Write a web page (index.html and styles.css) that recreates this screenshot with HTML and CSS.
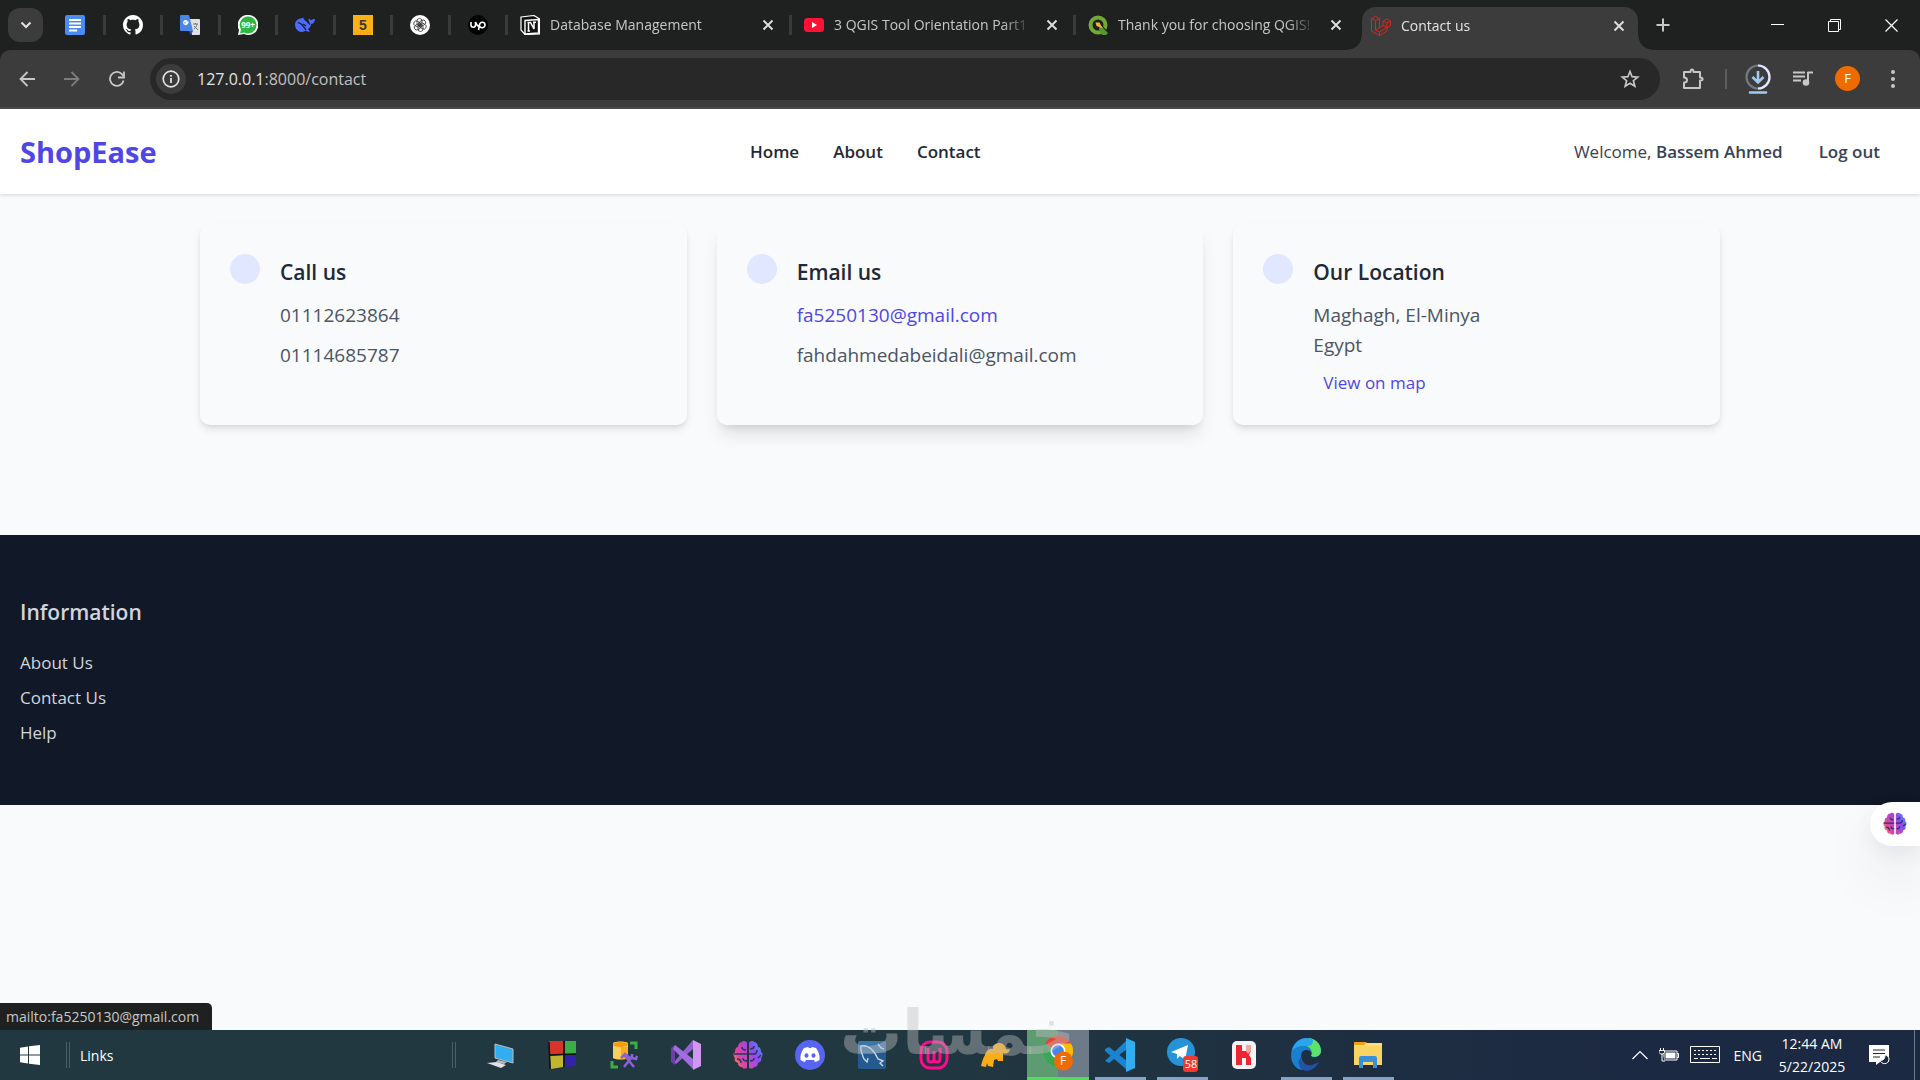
FILE: index.html
```html
<!DOCTYPE html>
<html lang="en">
  <head>
    <meta charset="utf-8" />
    <title>Contact us</title>
    <link rel="stylesheet" href="styles.css" />
  </head>
  <body>
    <!-- Shared icons -->
    <svg class="defs" aria-hidden="true">
      <defs>
        <linearGradient id="brain-left" x1="0" y1="1" x2="1" y2="0">
          <stop offset="0" stop-color="#f7a13c" />
          <stop offset="0.4" stop-color="#e0479b" />
          <stop offset="1" stop-color="#9a45e6" />
        </linearGradient>
        <linearGradient id="brain-right" x1="1" y1="0" x2="0" y2="1">
          <stop offset="0" stop-color="#38a5f5" />
          <stop offset="0.5" stop-color="#8a4df0" />
          <stop offset="1" stop-color="#d946b8" />
        </linearGradient>
        <symbol id="close" viewBox="0 0 12 12">
          <path d="M1.5 1.5l9 9M10.5 1.5l-9 9" stroke="currentColor" stroke-width="1.9" fill="none" />
        </symbol>
        <symbol id="brain" viewBox="0 0 30 30">
          <path fill="url(#brain-left)" d="M14 3v24c0 2-4 2-5 0-3 0-4-2-4-4-3-1-4-3-3-5-2-2-2-5 0-6 0-3 1-5 3-5 0-3 2-5 4-5 1-2 5-1 5 1z" />
          <path fill="url(#brain-right)" d="M16 3v24c0 2 4 2 5 0 3 0 4-2 4-4 3-1 4-3 3-5 2-2 2-5 0-6 0-3-1-5-3-5 0-3-2-5-4-5-1-2-5-1-5 1z" />
          <path class="brain-folds" d="M1 14h13M9 7c0 2 1 3 4 3M4 19c3 0 4 1 4 4M10 18c0 2 2 3 4 3M16 14h5c2 0 3-2 3-4M21 6c0 2-2 3-4 3M28 15l-3 3M17 21c3 0 4-1 4-3" />
        </symbol>
      </defs>
    </svg>

    <!-- Tab strip -->
    <div class="tabs">
      <button class="tab-search" aria-label="Search tabs">
        <svg width="12" height="8" viewBox="0 0 12 8"><path d="M1.5 1.5L6 6l4.5-4.5" fill="none" stroke="#e3e3e3" stroke-width="2" /></svg>
      </button>
      <div class="pinned">
        <button class="pin" aria-label="Docs">
          <svg width="20" height="20" viewBox="0 0 20 20"><rect width="20" height="20" rx="2" fill="#4b8bf5" /><path d="M4 5h12M4 8.5h12M4 12h12M4 15.5h8" stroke="#fff" stroke-width="1.8" /></svg>
        </button>
        <button class="pin" aria-label="GitHub">
          <svg width="20" height="20" viewBox="0 0 16 16"><path fill="#fff" d="M8 0C3.58 0 0 3.58 0 8c0 3.54 2.29 6.53 5.47 7.59.4.07.55-.17.55-.38 0-.19-.01-.82-.01-1.49-2.01.37-2.53-.49-2.69-.94-.09-.23-.48-.94-.82-1.13-.28-.15-.68-.52-.01-.53.63-.01 1.08.58 1.23.82.72 1.21 1.87.87 2.33.66.07-.52.28-.87.51-1.07-1.78-.2-3.64-.89-3.64-3.95 0-.87.31-1.59.82-2.15-.08-.2-.36-1.02.08-2.12 0 0 .67-.21 2.2.82.64-.18 1.32-.27 2-.27s1.36.09 2 .27c1.53-1.04 2.2-.82 2.2-.82.44 1.1.16 1.92.08 2.12.51.56.82 1.27.82 2.15 0 3.07-1.87 3.75-3.65 3.95.29.25.54.73.54 1.48 0 1.07-.01 1.93-.01 2.2 0 .21.15.46.55.38A8 8 0 0 0 16 8c0-4.42-3.58-8-8-8z" /></svg>
        </button>
        <button class="pin" aria-label="Translate">
          <svg width="20" height="20" viewBox="0 0 20 20"><path fill="#dfe1e5" d="M8 4h11a1 1 0 0 1 1 1v14a1 1 0 0 1-1 1h-7z" /><path fill="#4a86e8" d="M1 0h8l4 16H1a1 1 0 0 1-1-1V1a1 1 0 0 1 1-1z" /><path fill="#2a56c6" d="M9 16h4l-2 4z" /><path d="M8.5 7H6v1.5h1.5A2 2 0 1 1 7 6" fill="none" stroke="#fff" stroke-width="1.3" /><path d="M13 9h5M15.5 8v1M17 9c0 2-2 4-3 5M14 11l4 4" fill="none" stroke="#777" /></svg>
        </button>
        <button class="pin" aria-label="WhatsApp">
          <svg width="20" height="20" viewBox="0 0 20 20"><path fill="#fff" d="M10 0a10 10 0 1 1-4 19l-6 1 1-5A10 10 0 0 1 10 0z" /><path fill="#2bb741" d="M10 1.5a8.5 8.5 0 1 1-4 16l-4 1 1-4a8.5 8.5 0 0 1 7-13z" /><text x="10" y="13" class="badge-99">99+</text></svg>
        </button>
        <button class="pin" aria-label="DeepSeek">
          <svg width="20" height="16" viewBox="0 0 20 16"><path fill="#4d6bfe" d="M0 8c0-4 3-6.5 6-6.5 1 0 1.5-1 2.5-.5 0 2 3 3 5 6l1 1c1-1 .5-2-.5-3l-.5-3.5c1 1 2 .5 2.5 2 1-1 2-1.500 4-1.500 0 3-2 5-4 5 0 3-2 4-3 5l2 2.500c-2 .5-3-.5-5-.5-6 3-10-2-10-6.500z" /><path d="M3 6c3-1 5 3 8 7M8 7l3 2" fill="none" stroke="#1f2120" stroke-width="1.3" /></svg>
        </button>
        <button class="pin" aria-label="Khamsat">
          <svg width="20" height="20" viewBox="0 0 20 20"><rect width="20" height="20" fill="#fbb016" /><text x="10" y="15" class="five">5</text><path d="M1 17h18M2 19h17" stroke="#e8892b" stroke-width="1" stroke-dasharray="1 2" /></svg>
        </button>
        <button class="pin" aria-label="ChatGPT">
          <svg width="20" height="20" viewBox="0 0 20 20"><circle cx="10" cy="10" r="10" fill="#fff" /><g fill="none" stroke="#333" stroke-width=".8"><rect x="7" y="3.5" width="5" height="7.5" rx="2.5" /><rect x="7" y="3.5" width="5" height="7.5" rx="2.5" transform="rotate(60 10 10)" /><rect x="7" y="3.5" width="5" height="7.5" rx="2.5" transform="rotate(120 10 10)" /><rect x="7" y="3.5" width="5" height="7.5" rx="2.5" transform="rotate(180 10 10)" /><rect x="7" y="3.5" width="5" height="7.5" rx="2.5" transform="rotate(240 10 10)" /><rect x="7" y="3.5" width="5" height="7.5" rx="2.5" transform="rotate(300 10 10)" /></g></svg>
        </button>
        <button class="pin" aria-label="Upwork">
          <svg width="20" height="20" viewBox="0 0 20 20"><circle cx="10" cy="10" r="10" fill="#000" /><path d="M3 7v3c0 3 4.5 3 4.5 0V7c1 3 2 4 3.5 5M10.5 15l1-5c.5-4 5.5-3.5 5.5 0 0 3-3.5 3.5-5 1.5" fill="none" stroke="#fff" stroke-width="1.6" /></svg>
        </button>
      </div>
      <div class="tab">
        <svg width="20" height="20" viewBox="0 0 20 20"><path d="M1 2l13-1.5L19.5 4v15L5 19.5 1 15z" fill="#111" stroke="#fff" stroke-width="1.2" /><path d="M5 5.5L18.5 4.5v13.5L5 19z" fill="#111" stroke="#fff" stroke-width="1.4" /><path d="M7.5 7.5h3L14 14V7M8.5 8v8M7.5 16h2.5M13 7.3h3" fill="none" stroke="#fff" stroke-width="1.5" /></svg>
        <span class="tab-title">Database Management</span>
        <button class="tab-close" aria-label="Close tab"><svg width="12" height="12"><use href="#close" /></svg></button>
      </div>
      <div class="tab">
        <svg width="20" height="20" viewBox="0 0 20 20"><rect y="3" width="20" height="14" rx="3.5" fill="#ff1135" /><path d="M8 7l5 3-5 3z" fill="#fff" /></svg>
        <span class="tab-title">3 QGIS Tool Orientation Part1</span>
        <button class="tab-close" aria-label="Close tab"><svg width="12" height="12"><use href="#close" /></svg></button>
      </div>
      <div class="tab tab-last">
        <svg width="20" height="20" viewBox="0 0 20 20"><circle cx="10" cy="10" r="7.5" fill="none" stroke="#72a935" stroke-width="4" /><path d="M11 11l8 8" stroke="#1f2120" stroke-width="5" /><path d="M12 10l8 8-2 2-4 0-3-6z" fill="#589632" /><path d="M7.5 7.5h4l1.5 3 2 2.5-2.5-.5-4-1.5z" fill="#f2b52e" /></svg>
        <span class="tab-title">Thank you for choosing QGIS!</span>
        <button class="tab-close" aria-label="Close tab"><svg width="12" height="12"><use href="#close" /></svg></button>
      </div>
      <div class="tab tab-active">
        <svg width="20" height="20" viewBox="0 0 20 20"><path d="M.5 2.5L4.5.5l4 2v9l3.5-2V5l4-2 3.5 2v4.5l-3.5 2V15L8.5 19.5.5 15zM.5 2.5l4 2 4-2M4.5 4.5V14l4 2 7.5-4.5M4.5 14l4-2.5M8.5 16v3.5M12 5l3.8 2 3.7-2M15.8 7v4.5L12 9.5" fill="none" stroke="#d9251d" /></svg>
        <span class="tab-title">Contact us</span>
        <button class="tab-close" aria-label="Close tab"><svg width="12" height="12"><use href="#close" /></svg></button>
      </div>
      <button class="new-tab" aria-label="New tab">
        <svg width="14" height="14" viewBox="0 0 14 14"><path d="M7 .5v13M.5 7h13" stroke="#c7c7c7" stroke-width="2" /></svg>
      </button>
      <div class="window-buttons">
        <button aria-label="Minimize"><svg width="13" height="13" viewBox="0 0 13 13"><path d="M0 5.5h13" stroke="#fff" /></svg></button>
        <button aria-label="Restore"><svg width="13" height="13" viewBox="0 0 13 13"><path d="M.5 2.5h10v10H.5zM2.5 2.5v-2h10v10h-2" fill="none" stroke="#fff" /></svg></button>
        <button aria-label="Close"><svg width="13" height="13" viewBox="0 0 13 13"><path d="M.5.5l12 12M12.5.5l-12 12" stroke="#fff" stroke-width="1.2" /></svg></button>
      </div>
    </div>

    <!-- Toolbar -->
    <div class="toolbar">
      <button class="tool" aria-label="Back"><svg width="16" height="16" viewBox="0 0 16 16"><path d="M16 8H2M8.5 1L1.5 8l7 7" fill="none" stroke="#c7c7c7" stroke-width="1.8" /></svg></button>
      <button class="tool" aria-label="Forward"><svg width="16" height="16" viewBox="0 0 16 16"><path d="M0 8h14M7.5 1l7 7-7 7" fill="none" stroke="#7c7c7c" stroke-width="1.8" /></svg></button>
      <button class="tool" aria-label="Reload"><svg width="16" height="16" viewBox="0 0 16 16"><path d="M14.6 9.5A6.9 6.9 0 1 1 13 3.2l1.5 2" fill="none" stroke="#c7c7c7" stroke-width="1.8" /><path d="M15 .5v6H9" fill="none" stroke="#c7c7c7" stroke-width="1.8" /></svg></button>
      <div class="omnibox">
        <button class="site-info" aria-label="View site information"><svg width="18" height="18" viewBox="0 0 18 18"><circle cx="9" cy="9" r="7.8" fill="none" stroke="#e3e3e3" stroke-width="1.7" /><path d="M9 8v5M9 5v1.8" stroke="#e3e3e3" stroke-width="1.8" /></svg></button>
        <div class="url">127.0.0.1<span class="url-path">:8000/contact</span></div>
        <button class="bookmark" aria-label="Bookmark this tab"><svg width="20" height="20" viewBox="0 0 20 20"><path d="M10 2.5l2.1 5.2 5.6.4-4.3 3.6 1.4 5.5L10 14.2l-4.8 3 1.4-5.5L2.3 8.1l5.6-.4z" fill="none" stroke="#c7c7c7" stroke-width="1.7" /></svg></button>
      </div>
      <button class="tool tool-extensions" aria-label="Extensions"><svg width="22" height="22" viewBox="0 0 22 22"><path d="M2 4h6.5c0-3.5 3-3.5 3 0H18v5.5c3.5 0 3.5 3 0 3V20H2v-5.5c4 0 4-5 0-5z" fill="none" stroke="#c7c7c7" stroke-width="2" stroke-linejoin="round" /></svg></button>
      <span class="tool-line"></span>
      <button class="tool" aria-label="Downloads"><svg width="26" height="30" viewBox="0 0 26 30"><circle cx="13" cy="13" r="11.5" fill="none" stroke="#717984" stroke-width="2.2" /><path d="M13 1.5a11.5 11.5 0 0 1 0 23" fill="none" stroke="#e3e8ff" stroke-width="2.2" /><path d="M13 7v11M7.5 13l5.5 5.5 5.5-5.5" fill="none" stroke="#a2c9ee" stroke-width="2.6" /><path d="M5 28.5h16" stroke="#a2c9ee" stroke-width="2.5" stroke-linecap="round" /></svg></button>
      <button class="tool" aria-label="Media controls"><svg width="20" height="16" viewBox="0 0 20 16"><path d="M0 1.5h12M0 5.5h12M0 9.5h8M14.5 1.5H20M15 1v10" stroke="#c7c7c7" stroke-width="2" /><circle cx="13" cy="11.5" r="3.3" fill="#c7c7c7" /></svg></button>
      <button class="tool" aria-label="Profile"><span class="avatar">F</span></button>
      <button class="tool" aria-label="Menu"><svg width="4" height="18" viewBox="0 0 4 18"><g fill="#c7c7c7"><circle cx="2" cy="2" r="2" /><circle cx="2" cy="9" r="2" /><circle cx="2" cy="16" r="2" /></g></svg></button>
    </div>

    <!-- Page -->
    <div class="page">
      <header class="header">
        <a class="logo" href="#">ShopEase</a>
        <nav class="nav">
          <a href="#">Home</a>
          <a href="#">About</a>
          <a href="#">Contact</a>
        </nav>
        <div class="user">
          <span>Welcome, <b>Bassem Ahmed</b></span>
          <button class="logout">Log out</button>
        </div>
      </header>

      <main class="cards">
        <section class="card">
          <span class="dot"></span>
          <div>
            <h3>Call us</h3>
            <p>01112623864</p>
            <p>01114685787</p>
          </div>
        </section>
        <section class="card card-hover">
          <span class="dot"></span>
          <div>
            <h3>Email us</h3>
            <p><a href="mailto:fa5250130@gmail.com">fa5250130@gmail.com</a></p>
            <p>fahdahmedabeidali@gmail.com</p>
          </div>
        </section>
        <section class="card">
          <span class="dot"></span>
          <div>
            <h3>Our Location</h3>
            <p>Maghagh, El-Minya<br />Egypt</p>
            <a class="map-link" href="#">View on map</a>
          </div>
        </section>
      </main>

      <footer class="footer">
        <h3>Information</h3>
        <ul>
          <li><a href="#">About Us</a></li>
          <li><a href="#">Contact Us</a></li>
          <li><a href="#">Help</a></li>
        </ul>
      </footer>

      <button class="assistant" aria-label="Assistant"><svg width="24" height="24"><use href="#brain" /></svg></button>
      <div class="status">mailto:fa5250130@gmail.com</div>
    </div>

    <!-- Windows taskbar -->
    <div class="taskbar">
      <button class="start" aria-label="Start"><svg width="20" height="20" viewBox="0 0 20 20"><path fill="#fff" d="M0 2.8L8 1.5v8H0zM9 1.3L20 0v9.5H9zM0 10.5h8v8l-8-1.3zM9 10.5h11V20L9 18.7z" /></svg></button>
      <span class="grip"></span>
      <span class="links">Links</span>
      <span class="grip grip-end"></span>
      <div class="apps">
        <button class="app" aria-label="This PC"><svg width="28" height="28" viewBox="0 0 28 28"><path d="M9 3l18 5v14L9 17z" fill="#32aef0" stroke="#b7bec2" /><path d="M12 19l9 2-3 2-8-2z" fill="#b7bec2" /><path d="M1 22l10-1 9 3-5 3z" fill="#e0e3e5" /></svg></button>
        <button class="app" aria-label="Windows classic"><svg width="28" height="30" viewBox="0 0 28 30"><path d="M1 1h14v13l-14 1z" fill="#d8342a" /><path d="M17 1h11v13H17z" fill="#3aae44" /><path d="M2 16l13-1v12L3 29z" fill="#c0b52e" /><path d="M17 15h11v11l-11 1z" fill="#3224a8" /><path d="M1 2l1 27M16 1v26M1 15l27-1" stroke="#111" stroke-width="1.5" /></svg></button>
        <button class="app" aria-label="SQL tools"><svg width="28" height="28" viewBox="0 0 28 28"><path d="M3 2c2-2 13-2 15 0v15c-3 2-12 2-15 0z" fill="#f7cf5b" /><path d="M11 6h7v12h-7z" fill="#fbad18" /><ellipse cx="10.5" cy="3.5" rx="7.5" ry="2.5" fill="#f59c10" /><path d="M20 2h6v6M2 20v6h6" fill="none" stroke="#3aae44" stroke-width="3" /><path d="M11 17l4-4 5 4M15 15l9 11M14 26l8-10M22 13v4l4 1 1-3" fill="none" stroke="#8c62d6" stroke-width="2.5" /></svg></button>
        <button class="app" aria-label="Visual Studio"><svg width="30" height="30" viewBox="0 0 30 30"><path fill="#9660d0" d="M3 22l19-22v9L5 24z" /><path fill="#6a3fa8" d="M0 8l4-3v20l-4-3z" /><path fill="#a26de0" d="M4 5l18 14v10L2 9z" /><path fill="#cf97f0" d="M22 0l8 4v22l-8 4z" /></svg></button>
        <button class="app" aria-label="Brain"><svg width="30" height="30"><use href="#brain" /></svg></button>
        <button class="app" aria-label="Discord"><svg width="30" height="30" viewBox="0 0 30 30"><circle cx="15" cy="15" r="15" fill="#5865f2" /><path fill="#fff" d="M9 8l4-1 1 1h2l1-1 4 1c3 4 4 8 3.5 12-1.5 1-3 1.5-4.5 2l-1-2h-8l-1 2c-1.5-.5-3-1-4.5-2C5 16 6 12 9 8z" /><ellipse cx="11.5" cy="15.5" rx="2" ry="2.2" fill="#5865f2" /><ellipse cx="18.5" cy="15.5" rx="2" ry="2.2" fill="#5865f2" /></svg></button>
        <button class="app" aria-label="MySQL Workbench"><svg width="28" height="28" viewBox="0 0 28 28"><rect width="28" height="28" rx="2" fill="#245a8d" /><path d="M0 2a2 2 0 0 1 2-2h24a2 2 0 0 1 2 2v10H0z" fill="#3a77a8" /><path d="M6 18C4 13 2 9 3 5c8-2 14 6 17 13l5 2-3 2 3 3M6 18l3 3 1-4M20 3l3 4 3 1" fill="none" stroke="#c7d6e3" stroke-width="1.4" /></svg></button>
        <button class="app" aria-label="WampServer"><svg width="30" height="30" viewBox="0 0 30 30"><rect x="2" y="2" width="26" height="26" rx="9" fill="none" stroke="#ff0a8c" stroke-width="3" /><path d="M9 8v11c0 4 6 4 6 0v-8 8c0 4 6 4 6 0V8" fill="none" stroke="#ff0a8c" stroke-width="3" /></svg></button>
        <button class="app" aria-label="DBngin"><svg width="30" height="26" viewBox="0 0 30 26"><path fill="#fbad18" d="M12 4c4-5 12-4 13 3 2 1 3 0 4 0-1 5-4 5-7 4v8h-5l-1-2-3 1-1 7-5-1-1-3-1 4-5-1c1-4 2-8 4-11 1-4 4-7 8-6z" /></svg></button>
        <button class="app app-chrome" aria-label="Google Chrome"><svg width="30" height="36" viewBox="0 0 30 36"><path fill="#ea4335" d="M15 15L2 7.5a15 15 0 0 1 26 0z" /><path fill="#fbbc05" d="M15 15V7.5h13A15 15 0 0 1 15 30z" /><path fill="#34a853" d="M15 15l-1 15A15 15 0 0 1 2 7.5l6.5 11z" /><circle cx="15" cy="15" r="7.5" fill="#fff" /><circle cx="15" cy="15" r="5.8" fill="#4285f4" /><circle cx="20.5" cy="25" r="9.5" fill="#ee6b00" /><text x="20" y="29" class="chrome-f">F</text></svg></button>
        <button class="app app-open" aria-label="Visual Studio Code"><svg width="30" height="34" viewBox="0 0 30 34"><path fill="#1c84cf" d="M0 11l4-2 18 14v9L0 13zM0 23L22 2v9L4 25z" /><path fill="#32aef0" d="M21 0l9 4v26l-9 4z" /></svg></button>
        <button class="app app-open" aria-label="Telegram"><svg width="32" height="34" viewBox="0 0 32 34"><circle cx="15" cy="14" r="14" fill="#2593d6" /><path d="M5 14l17-7-3 15-5-4-3 3v-5z" fill="#fff" /><rect x="17" y="18" width="15" height="16" rx="3" fill="#ee3a33" /><text x="25" y="30" class="badge-58">58</text></svg></button>
        <button class="app" aria-label="Hotkeys"><svg width="24" height="28" viewBox="0 0 24 28"><rect width="24" height="28" rx="5" fill="#f4f4f6" /><path d="M4 4h6v6h4V4h5v6l-2 4 2 3v7h-5v-7h-4v7H4z" fill="#ee2430" /><path d="M14 4h5v6l-3 3-2-3z" fill="#f5a79d" /></svg></button>
        <button class="app app-open" aria-label="Microsoft Edge"><svg width="30" height="34" viewBox="0 0 30 34"><path fill="#1a7fd0" d="M0 18C0 6 8 0 16 0c8 0 14 6 14 13 0 5-5 7-9 6 1-4-1-7-6-7-6 0-8 11 3 17-10 8-18-3-18-11z" /><path fill="#5be36a" d="M18 0c7 1 12 6 12 13 0 5-6 7-10 5 2-4 0-9-5-10z" /><path fill="#2aa5ec" d="M1 13C3 4 9 0 16 0c3 0 5 1 6 2 0 6-4 6-9 6C7 8 3 10 1 13z" /><path fill="#2453a5" d="M10 19c0 6 6 9 11 8 4-1 6-3 7-3-3 6-8 9-13 9-8-2-9-10-5-14z" /></svg></button>
        <button class="app app-open" aria-label="File Explorer"><svg width="28" height="28" viewBox="0 0 28 28"><path d="M0 1h12l2 3H0z" fill="#f0a010" /><path d="M0 4h28v20H0z" fill="#f9d364" /><path d="M0 4h10l2-2h16v3H0z" fill="#fbdc7c" /><path d="M5 27V17a2 2 0 0 1 2-2h14a2 2 0 0 1 2 2v10h-4v-6H9v6z" fill="#3a8fd9" /></svg></button>
      </div>
      <div class="tray">
        <button aria-label="Show hidden icons"><svg width="16" height="10" viewBox="0 0 16 10"><path d="M.5 9L8 1.5 15.5 9" fill="none" stroke="#fff" stroke-width="1.2" /></svg></button>
        <svg width="20" height="14" viewBox="0 0 20 14"><path d="M5 3h13v9H5zM18 5.5h1.5v4H18" fill="none" stroke="#fff" /><path d="M6.5 4.5h10v6h-10z" fill="#fff" /><path d="M1.5 0v2M4.5 0v2M0 2.5h5.5v2L4 6H1.5L0 4.5zM3 6v7h3" fill="#1c2b42" stroke="#fff" /></svg>
        <svg width="30" height="18" viewBox="0 0 30 18"><path d="M.5.5h29v16H.5z" fill="none" stroke="#fff" /><path d="M4 4.5h23M4 8.5h23" stroke="#fff" stroke-dasharray="2 2" /><path d="M4 12.5h4M10 12.5h10M22 12.5h5" stroke="#fff" /></svg>
        <span class="lang">ENG</span>
        <div class="clock"><span>12:44 AM</span><span>5/22/2025</span></div>
        <button class="notify" aria-label="Notifications"><svg width="22" height="20" viewBox="0 0 22 20"><path d="M0 0h20v17h-9l-4 3v-3H0z" fill="#fff" /><path d="M4 5h12M4 8.5h12M4 12h7" stroke="#1c2942" stroke-width="1.2" /><path d="M16 10c0 4-2 6-5 5 1 5 9 5 9-1 0-2-2-4-4-4z" fill="#1c2942" stroke="#fff" /></svg></button>
        <span class="show-desktop"></span>
      </div>
    </div>
    <div class="watermark" lang="ar" dir="rtl">خمسات</div>
  </body>
</html>
```
FILE: styles.css
```css
* {
  box-sizing: border-box;
}

body {
  margin: 0;
  height: 100vh;
  display: flex;
  flex-direction: column;
  overflow: hidden;
  position: relative;
  background-color: #1f2120;
  font-family: "Open Sans", "Noto Sans", sans-serif;
}

button {
  padding: 0;
  border: none;
  background: none;
  color: inherit;
  font-family: inherit;
  cursor: pointer;
  display: flex;
  align-items: center;
  justify-content: center;
}

a {
  color: inherit;
  text-decoration: none;
}

h3,
p,
ul {
  margin: 0;
  padding: 0;
}

svg {
  flex: none;
}

.defs {
  position: absolute;
  width: 0;
  height: 0;
}

.brain-folds {
  fill: none;
  stroke: #2b3560;
  stroke-width: 1.5;
}

/* lighter folds on the white button */
.assistant {
  --folds: #d9c2ff;
}

.assistant .brain-folds {
  stroke: var(--folds);
}

/* Tab strip */
.tabs {
  display: flex;
  align-items: center;
  height: 50px;
  padding-left: 8px;
  color: #c7c7c7;
  font-size: 14px;
}

.tab-search {
  width: 35px;
  height: 34px;
  border-radius: 12px;
  background-color: #3c3c3c;
}

.pinned {
  display: grid;
  grid-template-columns: repeat(8, 1fr);
  width: 460px;
  margin-left: 5px;
}

.pin,
.tab {
  height: 20px;
  border-right: 3px solid #3a3a3a;
}

.tab {
  display: flex;
  align-items: center;
  flex: 0 1 284px;
  min-width: 0;
  padding: 0 11px 0 12px;
  gap: 10px;
}

.tab-title {
  flex: 1;
  overflow: hidden;
  white-space: nowrap;
  line-height: 20px;
  -webkit-mask-image: linear-gradient(to left, transparent, #000 30px);
  mask-image: linear-gradient(to left, transparent, #000 30px);
}

.tab-close {
  width: 20px;
  height: 20px;
  color: #dedede;
}

.tab-last {
  border-right-color: transparent;
}

.tab-active {
  flex-basis: 276px;
  align-self: flex-end;
  height: 43px;
  margin-left: 2px;
  padding: 0 9px 5px;
  border: none;
  border-radius: 14px 14px 0 0;
  background-color: #3c3c3c;
  color: #e3e3e3;
  position: relative;
}

/* curved feet of the active tab */
.tab-active::before,
.tab-active::after {
  content: "";
  position: absolute;
  bottom: 0;
  width: 14px;
  height: 14px;
}

.tab-active::before {
  right: 100%;
  background: radial-gradient(circle at 0 0, transparent 13px, #3c3c3c 14px);
}

.tab-active::after {
  left: 100%;
  background: radial-gradient(circle at 100% 0, transparent 13px, #3c3c3c 14px);
}

.new-tab {
  width: 50px;
  height: 34px;
}

.window-buttons {
  display: flex;
  margin-left: auto;
}

.window-buttons button {
  width: 57px;
  height: 50px;
}

.badge-99 {
  font: bold 8px "Open Sans", sans-serif;
  fill: #fff;
  text-anchor: middle;
}

.five {
  font: bold 14px "Liberation Sans", sans-serif;
  fill: #3a3a2a;
  text-anchor: middle;
}

/* Toolbar */
.toolbar {
  display: flex;
  align-items: center;
  height: 59px;
  padding: 0 5px 0 4px;
  border-bottom: 2px solid #4a484a;
  border-radius: 10px 10px 0 0;
  background-color: #3c3c3c;
}

.tool {
  width: 45px;
  height: 40px;
}

.omnibox {
  flex: 1;
  display: flex;
  align-items: center;
  height: 42px;
  margin-left: 11px;
  padding: 0 20px 0 6px;
  border-radius: 21px;
  background-color: #282828;
}

.site-info {
  width: 30px;
  height: 30px;
  border-radius: 50%;
  background-color: #3c3c3c;
}

.url {
  flex: 1;
  padding-left: 11px;
  color: #e3e3e3;
  font-size: 16px;
}

.url-path {
  color: #c0c0c0;
}

.tool-extensions {
  margin-left: 10px;
}

.tool-line {
  width: 2px;
  height: 20px;
  margin: 0 8px 0 10px;
  background-color: #5f5b5f;
}

.avatar {
  width: 25px;
  height: 25px;
  border-radius: 50%;
  background-color: #ee6b00;
  color: #fff;
  font-size: 13px;
  line-height: 25px;
}

/* Page */
.page {
  flex: 1;
  position: relative;
  overflow: hidden;
  background-color: #f9fafc;
}

.header {
  display: flex;
  align-items: center;
  justify-content: space-between;
  height: 85px;
  padding: 0 20px;
  background-color: #fff;
  box-shadow: 0 1px 4px rgba(0, 0, 0, 0.15);
  color: #1f2937;
  font-size: 17px;
}

.logo {
  color: #4f46e5;
  font-size: 29px;
  font-weight: 700;
}

.nav {
  display: flex;
  gap: 34px;
  font-weight: 600;
}

.user {
  display: flex;
  color: #374151;
}

.user b {
  font-weight: 600;
}

.logout {
  padding: 0 20px;
  margin-left: 16px;
  font-size: 17px;
  font-weight: 600;
}

.cards {
  display: grid;
  grid-template-columns: repeat(3, 1fr);
  gap: 30px;
  max-width: 1600px;
  margin: 0 auto;
  padding: 30px 40px 110px;
}

.card {
  display: flex;
  gap: 20px;
  padding: 30px;
  border-radius: 10px;
  background-color: #f9fafc;
  box-shadow: 0 5px 8px -1px rgba(0, 0, 0, 0.1), 0 2px 5px -2px rgba(0, 0, 0, 0.1);
  color: #4b5563;
  font-size: 19px;
  line-height: 30px;
}

.card-hover {
  box-shadow: 0 12px 18px -4px rgba(0, 0, 0, 0.12), 0 5px 8px -5px rgba(0, 0, 0, 0.12);
}

.dot {
  flex: none;
  width: 30px;
  height: 30px;
  border-radius: 50%;
  background-color: #e0e7ff;
}

.card h3 {
  color: #1f2937;
  font-size: 21px;
  font-weight: 600;
  line-height: 36px;
}

.card p {
  margin-top: 10px;
}

.card a {
  color: #4f46e5;
}

.card .map-link {
  display: block;
  margin-top: 10px;
  padding: 0 10px;
  font-size: 17px;
  line-height: 25px;
}

.footer {
  padding: 60px 20px;
  background-color: #111827;
  color: #d1d5db;
  font-size: 17px;
  line-height: 25px;
}

.footer h3 {
  margin-bottom: 20px;
  font-size: 21px;
  font-weight: 600;
  line-height: 35px;
}

.footer ul {
  display: flex;
  flex-direction: column;
  gap: 10px;
  list-style: none;
}

.assistant {
  position: absolute;
  right: 0;
  bottom: 184px;
  width: 50px;
  height: 44px;
  border-radius: 22px 0 0 22px;
  background-color: #fff;
  box-shadow: 0 30px 60px rgba(0, 0, 0, 0.08), 0 8px 20px rgba(0, 0, 0, 0.06);
}

.status {
  position: absolute;
  left: 0;
  bottom: 0;
  padding: 0 13px 0 6px;
  border-radius: 0 5px 0 0;
  background-color: #1f2120;
  color: #c7c7c7;
  font-size: 14px;
  line-height: 27px;
}

/* Taskbar */
.taskbar {
  display: flex;
  align-items: center;
  height: 50px;
  background: linear-gradient(to right, #213840 45%, #1c2942 85%);
  color: #fff;
  font-size: 14px;
}

.start {
  width: 60px;
  height: 50px;
}

.grip {
  flex: none;
  width: 4px;
  height: 26px;
  margin-left: 6px;
  border: solid #4d5d6b;
  border-width: 0 1px;
}

.links {
  flex: 0 1 382px;
  padding-left: 10px;
}

.grip-end {
  margin-left: 0;
  margin-right: 13px;
}

.apps {
  display: flex;
}

.app {
  width: 62px;
  height: 50px;
  position: relative;
}

.app-open::after {
  content: "";
  position: absolute;
  left: 6px;
  right: 5px;
  bottom: 0;
  height: 3px;
  background-color: #86a3c3;
}

.app-chrome {
  border-bottom: 3px solid #52dc5c;
  background: linear-gradient(to right, #5c9c70 50%, #6d7b88 50%);
}

.chrome-f {
  font: 12px "Open Sans", sans-serif;
  fill: #fff;
  text-anchor: middle;
}

.badge-58 {
  font: 11px "Open Sans", sans-serif;
  fill: #fff;
  text-anchor: middle;
}

.tray {
  display: flex;
  align-items: center;
  margin-left: auto;
}

.tray svg + svg,
.tray button + svg {
  margin-left: 11px;
}

.lang {
  margin-left: 14px;
}

.clock {
  display: flex;
  flex-direction: column;
  align-items: center;
  width: 100px;
  line-height: 23px;
}

.notify {
  margin-left: 7px;
}

.show-desktop {
  width: 1px;
  height: 50px;
  margin: 0 5px 0 23px;
  background-color: #6f7a8a;
}

/* Watermark over the bottom of the screen */
.watermark {
  position: absolute;
  left: 840px;
  bottom: 16px;
  color: rgba(190, 190, 190, 0.42);
  font-family: "DejaVu Sans", sans-serif;
  font-size: 62px;
  font-weight: 700;
  line-height: 62px;
  pointer-events: none;
}
```
